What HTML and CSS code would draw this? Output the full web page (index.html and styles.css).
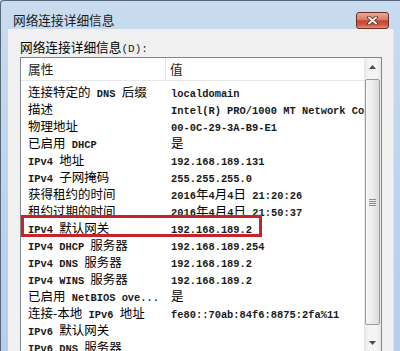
FILE: index.html
```html
<html>
<head>
<meta charset="utf-8">
<link rel="stylesheet" href="styles.css">
</head>
<body>
<div class="window">
  <div class="titlebar">
    <div class="title">网络连接详细信息</div>
    <div class="close">
      <svg width="11" height="9" viewBox="0 0 11 9">
        <path d="M2 1.5 L9 7.5 M9 1.5 L2 7.5" stroke="#5b2118" stroke-width="3.6" stroke-linecap="round"/>
        <path d="M2 1.5 L9 7.5 M9 1.5 L2 7.5" stroke="#fff" stroke-width="2" stroke-linecap="round"/>
      </svg>
    </div>
  </div>
  <div class="content">
    <div class="label">网络连接详细信息<span class="key">(D):</span></div>
    <div class="listbox">
      <div class="list">
        <div class="header">
          <div class="head-prop">属性</div>
          <div class="head-val">值</div>
        </div>
        <div class="rows">
          <div class="row"><div class="prop"><span class="zh">连接特定的</span> DNS <span class="zh">后缀</span></div><div class="val">localdomain</div></div>
          <div class="row"><div class="prop"><span class="zh">描述</span></div><div class="val">Intel(R) PRO/1000 MT Network Connection</div></div>
          <div class="row"><div class="prop"><span class="zh">物理地址</span></div><div class="val">00-0C-29-3A-B9-E1</div></div>
          <div class="row"><div class="prop"><span class="zh">已启用</span> DHCP</div><div class="val"><span class="zh">是</span></div></div>
          <div class="row"><div class="prop">IPv4 <span class="zh">地址</span></div><div class="val">192.168.189.131</div></div>
          <div class="row"><div class="prop">IPv4 <span class="zh">子网掩码</span></div><div class="val">255.255.255.0</div></div>
          <div class="row"><div class="prop"><span class="zh">获得租约的时间</span></div><div class="val">2016<span class="zh">年</span>4<span class="zh">月</span>4<span class="zh">日</span> 21:20:26</div></div>
          <div class="row"><div class="prop"><span class="zh">租约过期的时间</span></div><div class="val">2016<span class="zh">年</span>4<span class="zh">月</span>4<span class="zh">日</span> 21:50:37</div></div>
          <div class="row"><div class="prop">IPv4 <span class="zh">默认网关</span></div><div class="val">192.168.189.2</div></div>
          <div class="row"><div class="prop">IPv4 DHCP <span class="zh">服务器</span></div><div class="val">192.168.189.254</div></div>
          <div class="row"><div class="prop">IPv4 DNS <span class="zh">服务器</span></div><div class="val">192.168.189.2</div></div>
          <div class="row"><div class="prop">IPv4 WINS <span class="zh">服务器</span></div><div class="val">192.168.189.2</div></div>
          <div class="row"><div class="prop"><span class="zh">已启用</span> NetBIOS ove...</div><div class="val"><span class="zh">是</span></div></div>
          <div class="row"><div class="prop"><span class="zh">连接-本地</span> IPv6 <span class="zh">地址</span></div><div class="val">fe80::70ab:84f6:8875:2fa%11</div></div>
          <div class="row"><div class="prop">IPv6 <span class="zh">默认网关</span></div><div class="val"></div></div>
          <div class="row"><div class="prop">IPv6 DNS <span class="zh">服务器</span></div><div class="val"></div></div>
        </div>
        <div class="mark"></div>
      </div>
      <div class="scrollbar">
        <div class="sb-btn">
          <svg width="7" height="4" viewBox="0 0 7 4"><polygon points="0,4 3.5,0 7,4" fill="#474d57"/></svg>
        </div>
        <div class="thumb">
          <svg width="7" height="7" viewBox="0 0 7 7">
            <path d="M0 0.5 H7 M0 2.5 H7 M0 4.5 H7 M0 6.5 H7" stroke="#8d8d8d" stroke-width="1"/>
          </svg>
        </div>
        <div class="sb-btn down">
          <svg width="7" height="4" viewBox="0 0 7 4"><polygon points="0,0 7,0 3.5,4" fill="#474d57"/></svg>
        </div>
      </div>
    </div>
  </div>
</div>
</body>
</html>
```

FILE: styles.css
```css
html, body {
  margin: 0;
}

body {
  width: 400px;
  height: 351px;
  overflow: hidden;
  font-family: "Noto Sans CJK SC", sans-serif;
  color: #000;
  background-color: #c4d7eb;
}

.window {
  display: flex;
  flex-direction: column;
  height: 362px;
  border-top: 1px solid #566879;
  border-left: 1px solid #566879;
  border-top-left-radius: 4px;
  background: linear-gradient(#c9dcef, #bcd3ea 60%, #b6cee8);
}

.titlebar {
  display: flex;
  align-items: flex-start;
  height: 31px;
  padding-left: 12px;
}

.title {
  flex: 1;
  margin-top: 10px;
  font-size: 12.7px;
  line-height: 18px;
  color: #1c1c1c;
}

.close {
  display: flex;
  align-items: center;
  justify-content: center;
  box-sizing: border-box;
  width: 33px;
  height: 17px;
  margin-top: 11px;
  margin-right: 11px;
  border: 1px solid #6e2c22;
  border-radius: 3px;
  background: linear-gradient(#e9a997, #d77c68 45%, #c4442e 52%, #cc5a44 80%, #e0937f);
}

.content {
  flex: 1;
  display: flex;
  flex-direction: column;
  margin: 0 8px 0 7px;
  padding: 9px 10px 6px 12px;
  background-color: #f0f0f0;
  box-shadow: 1px 0 0 #f6eef3, 2px 0 0 #d9e6f4;
}

.label {
  height: 18px;
  font-size: 12.7px;
  line-height: 18px;
}

.key {
  font-family: "Liberation Mono", monospace;
  font-size: 11px;
  color: #222;
}

.listbox {
  flex: 1;
  display: flex;
  margin-top: 1px;
  border: 1px solid #828790;
  background-color: #fff;
}

.list {
  flex: 1;
  position: relative;
  overflow: hidden;
}

.header {
  display: flex;
  height: 22px;
  border-bottom: 1px solid #e5e7ea;
  font-size: 12.7px;
  line-height: 22px;
  color: #1e1e1e;
}

.head-prop {
  width: 145px;
  box-sizing: border-box;
  padding-left: 7px;
  border-right: 1px solid #e1e3e6;
}

.head-val {
  padding-left: 4px;
}

.rows {
  padding-top: 4.5px;
  font-family: "Liberation Mono", monospace;
  font-size: 10.4px;
  font-weight: bold;
  color: #1a1a1a;
}

.row {
  display: flex;
  height: 17px;
  line-height: 17px;
  white-space: nowrap;
}

.prop {
  width: 145px;
  box-sizing: border-box;
  padding-left: 7px;
}

.val {
  flex: 1;
  padding-left: 5px;
  overflow: hidden;
}

.zh {
  font-family: "Noto Sans CJK SC", sans-serif;
  font-size: 12.5px;
  font-weight: normal;
  line-height: 1;
  color: #000;
}

.mark {
  position: absolute;
  left: 0;
  top: 157px;
  width: 241px;
  height: 22px;
  box-sizing: border-box;
  border: 3px solid #c6232b;
}

.scrollbar {
  width: 17px;
  display: flex;
  flex-direction: column;
  align-items: center;
  background: linear-gradient(to right, #e6e6e6, #f4f4f4 25%, #f4f4f4 75%, #e8e8e8);
}

.sb-btn {
  display: flex;
  align-items: center;
  justify-content: center;
  width: 17px;
  height: 17px;
}

.sb-btn.down {
  margin-top: 9px;
}

.thumb {
  display: flex;
  align-items: center;
  justify-content: center;
  box-sizing: border-box;
  width: 15px;
  height: 246px;
  margin-top: 4px;
  border: 1px solid #9b9b9b;
  border-radius: 2px;
  background: linear-gradient(to right, #f6f6f6, #ececec 50%, #dadada);
}
```
